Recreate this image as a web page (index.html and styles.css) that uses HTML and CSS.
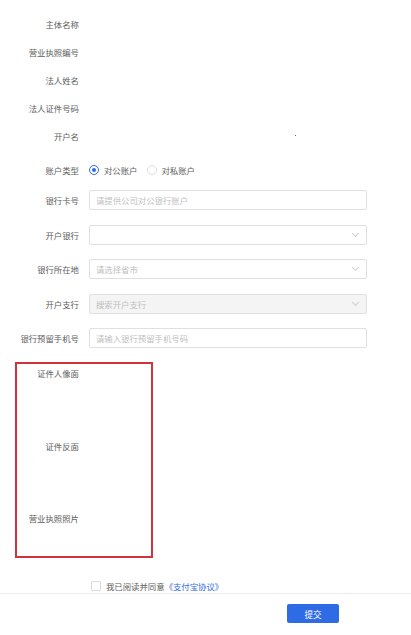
FILE: index.html
```html
<!DOCTYPE html>
<html>
<head>
<meta charset="utf-8">
<title>商户信息</title>
<link rel="stylesheet" href="styles.css">
</head>
<body>

<div class="form">

  <!-- read only info -->
  <div class="info">
    <div class="row"><span class="lbl">主体名称</span></div>
    <div class="row"><span class="lbl">营业执照编号</span></div>
    <div class="row"><span class="lbl">法人姓名</span></div>
    <div class="row"><span class="lbl">法人证件号码</span></div>
    <div class="row"><span class="lbl">开户名</span><span class="speck"></span></div>
  </div>

  <div class="row radio-row">
    <span class="lbl">账户类型</span>
    <span class="radio on"></span><span class="rtext">对公账户</span>
    <span class="radio"></span><span class="rtext">对私账户</span>
  </div>

  <div class="fields">
    <div class="row field">
      <span class="lbl">银行卡号</span>
      <div class="box"><span class="ph">请提供公司对公银行账户</span></div>
    </div>
    <div class="row field">
      <span class="lbl">开户银行</span>
      <div class="box sel"><span class="ph"></span><span class="arrow"></span></div>
    </div>
    <div class="row field">
      <span class="lbl">银行所在地</span>
      <div class="box sel"><span class="ph">请选择省市</span><span class="arrow"></span></div>
    </div>
    <div class="row field">
      <span class="lbl">开户支行</span>
      <div class="box sel off"><span class="ph">搜索开户支行</span><span class="arrow"></span></div>
    </div>
    <div class="row field">
      <span class="lbl">银行预留手机号</span>
      <div class="box"><span class="ph">请输入银行预留手机号码</span></div>
    </div>
  </div>

  <!-- uploads -->
  <div class="upload">
    <div class="urow"><span class="ulbl">证件人像面</span></div>
    <div class="urow"><span class="ulbl">证件反面</span></div>
    <div class="urow"><span class="ulbl">营业执照照片</span></div>
  </div>

  <div class="agree">
    <span class="check"></span>
    <span>我已阅读并同意</span><a class="link">《支付宝协议》</a>
  </div>
</div>

<div class="footer">
  <button class="submit">提交</button>
</div>

</body>
</html>
```

FILE: styles.css
```css
body {
  margin: 0;
  background: #fff;
  font-family: "Noto Sans CJK SC", "Noto Sans", sans-serif;
  font-size: 8.4px;
  color: #5e5e5e;
}

.form { padding-top: 10px; }

.row { display: flex; align-items: center; gap: 10px; }
.info .row { height: 28px; position: relative; }
.lbl { flex: none; width: 79px; text-align: right; line-height: 12px; }

.speck {
  position: absolute; left: 295px; top: 13px;
  width: 1px; height: 1px; background: #666;
}

.radio-row { height: 20px; margin-top: 10px; gap: 0; }
.radio-row .lbl { margin-right: 10px; }
.radio {
  width: 8px; height: 8px; border-radius: 50%;
  border: 1px solid #dcdcdc; background: #fff;
  position: relative;
}
.radio.on { border-color: #2f6be4; }
.radio.on::after {
  content: ""; position: absolute; left: 2px; top: 2px;
  width: 4px; height: 4px; border-radius: 50%; background: #2f6be4;
}
.rtext { margin: 0 9px 0 5px; }

.fields { display: flex; flex-direction: column; gap: 14.5px; margin-top: 10px; }
.field { height: 20px; }
.box {
  box-sizing: border-box;
  width: 278px; height: 20px;
  border: 1px solid #e0e0e0; border-radius: 2px;
  display: flex; align-items: center; justify-content: space-between;
  padding: 0 8px 0 6px;
}
.box.off { background: #f4f4f4; }
.ph { color: #c0c0c0; }
.arrow {
  width: 4px; height: 4px;
  border-right: 1px solid #d0d0d0; border-bottom: 1px solid #d0d0d0;
  transform: rotate(45deg); margin-top: -3px;
}

.upload {
  box-sizing: border-box;
  width: 138px; height: 196px;
  margin: 14px 0 0 15px;
  border: 2px solid #d2323b;
  padding-top: 3px;
}
.urow { height: 72.5px; }
.ulbl { display: block; width: 62px; text-align: right; line-height: 12px; }

.agree {
  display: flex; align-items: center;
  height: 12px; margin-top: 22px; padding-left: 91px;
}
.check {
  width: 8px; height: 8px; border: 1px solid #dcdcdc; border-radius: 1px;
  margin-right: 5px;
}
.link { color: #2f6be4; }

.footer {
  margin-top: 1px;
  border-top: 1px solid #eeeeee;
  height: 41px;
  box-sizing: border-box;
  padding: 10px 0 0 287px;
}
.submit {
  width: 52px; height: 19px;
  border: 0; border-radius: 2px;
  background: #2f6be4; color: #fff;
  font-family: inherit; font-size: 8.6px;
  padding: 0;
}
```
